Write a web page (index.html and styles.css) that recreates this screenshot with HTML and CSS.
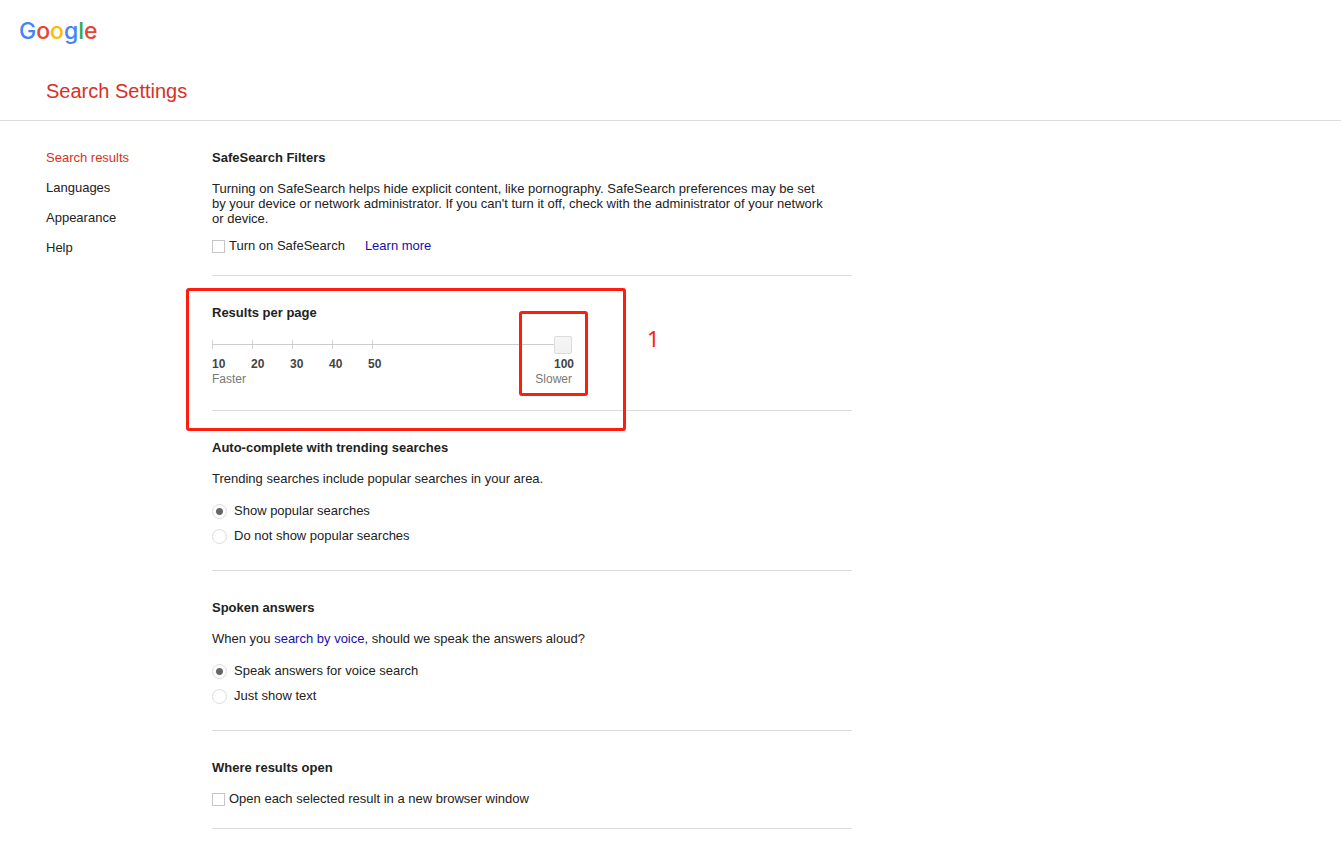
FILE: index.html
```html
<!DOCTYPE html>
<html lang="en">
<head>
  <meta charset="utf-8">
  <title>Search Settings</title>
  <link rel="stylesheet" href="styles.css">
</head>
<body>
  <header>
    <a class="logo" href="#"><span class="blue">G</span><span class="red">o</span><span class="yellow">o</span><span class="blue">g</span><span class="green">l</span><span class="red">e</span></a>
    <h1>Search Settings</h1>
  </header>

  <div class="container">
    <nav>
      <a class="active" href="#">Search results</a>
      <a href="#">Languages</a>
      <a href="#">Appearance</a>
      <a href="#">Help</a>
    </nav>

    <main>
      <section>
        <h2>SafeSearch Filters</h2>
        <p>Turning on SafeSearch helps hide explicit content, like pornography. SafeSearch preferences may be set by your device or network administrator. If you can't turn it off, check with the administrator of your network or device.</p>
        <div class="check-row">
          <input type="checkbox" id="safe">
          <label for="safe">Turn on SafeSearch</label>
          <a class="learn" href="#">Learn more</a>
        </div>
      </section>

      <section class="results">
        <h2 id="resultsTitle">Results per page</h2>
        <div class="slider">
          <div class="ticks"><i></i><i></i><i></i><i></i><i></i></div>
          <input type="range" min="10" max="100" step="10" value="100" aria-labelledby="resultsTitle">
        </div>
        <div class="numbers">
          <span>10</span><span>20</span><span>30</span><span>40</span><span>50</span><span class="last">100</span>
        </div>
        <div class="speed"><span>Faster</span><span>Slower</span></div>
        <div class="mark mark-outer"></div>
        <div class="mark mark-inner"></div>
        <div class="mark-number">1</div>
      </section>

      <section>
        <h2>Auto-complete with trending searches</h2>
        <p>Trending searches include popular searches in your area.</p>
        <div class="radio-row">
          <input type="radio" name="trending" id="show" checked>
          <label for="show">Show popular searches</label>
        </div>
        <div class="radio-row">
          <input type="radio" name="trending" id="hide">
          <label for="hide">Do not show popular searches</label>
        </div>
      </section>

      <section>
        <h2>Spoken answers</h2>
        <p>When you <a href="#">search by voice</a>, should we speak the answers aloud?</p>
        <div class="radio-row">
          <input type="radio" name="spoken" id="speak" checked>
          <label for="speak">Speak answers for voice search</label>
        </div>
        <div class="radio-row">
          <input type="radio" name="spoken" id="text">
          <label for="text">Just show text</label>
        </div>
      </section>

      <section>
        <h2>Where results open</h2>
        <div class="check-row">
          <input type="checkbox" id="window">
          <label for="window">Open each selected result in a new browser window</label>
        </div>
      </section>
    </main>
  </div>
</body>
</html>
```
FILE: styles.css
```css
* { box-sizing: border-box; }

body {
  margin: 0;
  font: 13px/15px Arial, "Liberation Sans", sans-serif;
  color: #222;
  background: #fff;
}

a { color: #1a0dab; text-decoration: none; }

header {
  padding: 15px 19px 17px;
  border-bottom: 1px solid #dcdcdc;
}
.logo {
  display: block;
  font: 500 23px/32px Inter, sans-serif;
}
.blue { color: #4285f4; }
.red { color: #ea4335; }
.yellow { color: #fbbc05; }
.green { color: #34a853; }
h1 {
  margin: 32px 0 0 27px;
  font-size: 20px;
  font-weight: normal;
  line-height: 24px;
  color: #d93025;
}

.container { display: flex; padding-left: 46px; }
nav {
  display: flex;
  flex-direction: column;
  gap: 15px;
  width: 166px;
  padding-top: 29px;
}
nav a { color: #222; }
nav .active { color: #d93025; }

main { flex: 0 1 640px; }
section {
  position: relative;
  padding: 29px 0 22px;
  border-bottom: 1px solid #dcdcdc;
}
h2 { margin: 0 0 16px; font-size: 13px; line-height: 15px; }
p { margin: 0 0 12px; max-width: 616px; }

.check-row, .radio-row { display: flex; align-items: center; }
.check-row { height: 15px; }
.radio-row { height: 25px; }
.learn { margin-left: 20px; }

input { appearance: none; margin: 0; background: #fff; }
input[type=checkbox] {
  width: 13px;
  height: 13px;
  margin: 2px 4px 0 0;
  border: 1px solid #c6c6c6;
}
input[type=radio] {
  width: 15px;
  height: 15px;
  margin: 2px 7px 0 0;
  border: 1px solid #dcdcdc;
  border-radius: 50%;
}
input[type=radio]:checked {
  background: radial-gradient(circle, #666 3px, #fff 4px);
}

.slider { position: relative; width: 360px; height: 18px; }
.ticks { position: absolute; top: 4px; display: flex; gap: 39px; }
.ticks i { width: 1px; height: 9px; background: #d4d4d4; }
input[type=range] {
  position: relative;
  display: block;
  width: 100%;
  height: 18px;
  background: linear-gradient(#ccc, #ccc) 0 8px / 100% 1px no-repeat;
}
input[type=range]::-webkit-slider-thumb {
  appearance: none;
  width: 18px;
  height: 18px;
  border: 1px solid #dcdcdc;
  border-radius: 2px;
  background: linear-gradient(#f5f5f5, #f1f1f1);
}

.numbers {
  display: flex;
  width: 362px;
  margin-top: 3px;
  font-size: 12px;
  font-weight: bold;
  color: #444;
}
.numbers span { width: 39px; }
.numbers .last { width: auto; margin-left: auto; }
.speed {
  display: flex;
  justify-content: space-between;
  width: 360px;
  font-size: 12px;
  color: #777;
}
.results { padding-bottom: 23px; }

/* red callouts */
.mark {
  position: absolute;
  border: 3px solid #ff1d10;
  border-radius: 3px;
  pointer-events: none;
}
.mark-outer { left: -26px; top: 12px; width: 440px; height: 143px; }
.mark-inner { left: 307px; top: 35px; width: 69px; height: 85px; }
.mark-number {
  position: absolute;
  left: 435px;
  top: 50px;
  font: 22px/24px "Noto Sans", sans-serif;
  color: #ff1d10;
}
```
